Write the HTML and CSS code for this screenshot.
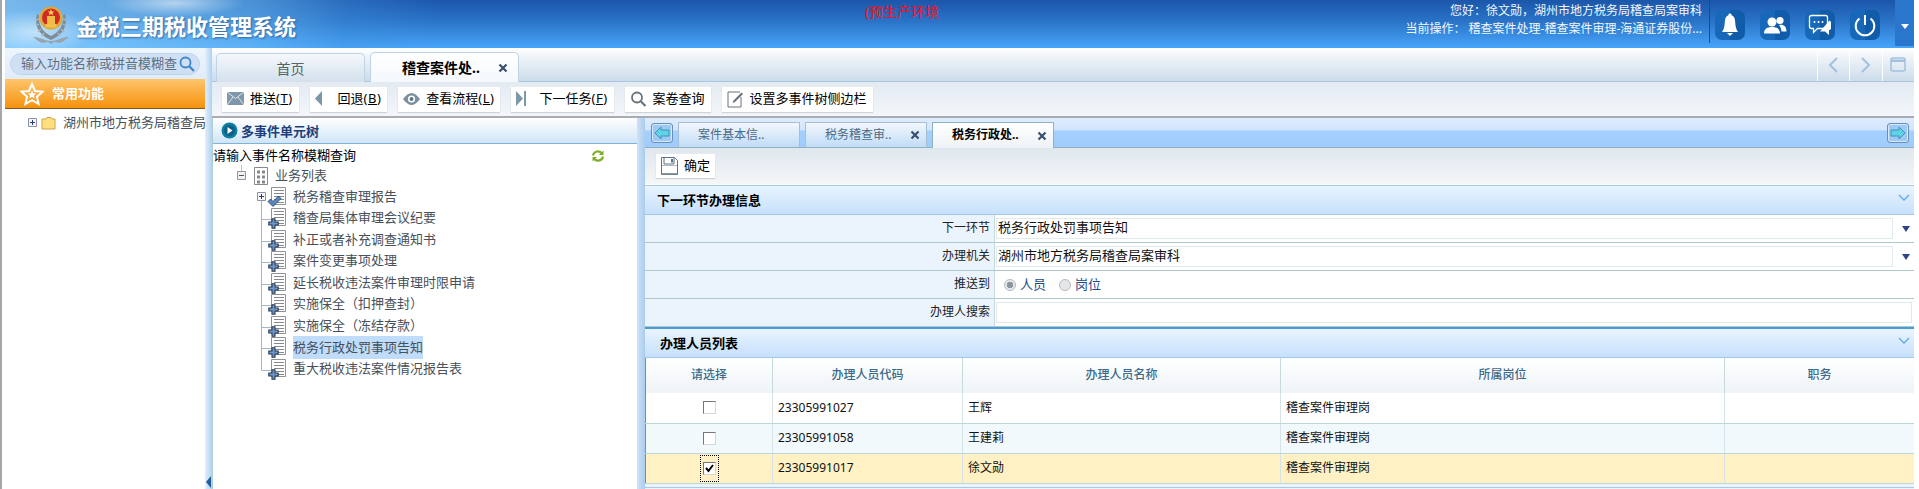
FILE: index.html
```html
<!DOCTYPE html>
<html lang="zh-CN">
<head>
<meta charset="utf-8">
<title>金税三期税收管理系统</title>
<link rel="stylesheet" href="styles.css">
</head>
<body>
<svg class="defs" width="0" height="0">
  <symbol id="doc" viewBox="0 0 15 18">
    <path d="M.5.500h14v17H.5z" fill="#fff" stroke="#8f9296"/>
    <path d="M3 3.500h10M3 6.500h10M3 9.500h10M3 12.500h10M3 15.500h10" stroke="#85888c"/>
  </symbol>
  <symbol id="plusb" viewBox="0 0 11 11">
    <path d="M4 .8h3v3.2h3.2v3H7v3.2H4V7H.8V4H4z" fill="#6d97cc" stroke="#2c3a52" stroke-width="1.1"/>
  </symbol>
  <symbol id="chev" viewBox="0 0 12 8"><path d="M1 1l5 5 5-5" fill="none" stroke="#5fa8ea" stroke-width="1.300"/></symbol>
  <symbol id="x" viewBox="0 0 10 10"><path d="M1.500 1.500l7 7M8.500 1.500l-7 7" stroke="#36506f" stroke-width="2.200"/></symbol>
</svg>
<div class="page">
  <header class="top">
    <svg class="logo" width="36" height="40" viewBox="0 0 36 40">
      <path d="M0 32c5 0 9 2 12 3 2 .7 4 1 6 1s4-.3 6-1c3-1 7-3 12-3-3 2-6 5-9 6l-6-1-3 2-3-2-6 1c-3-1-6-4-9-6z" fill="#97a4ad"/>
      <path d="M4 9C1 19 5 30 18 35 31 30 35 19 32 9l-2 1c1 9-3 17-12 21C9 27 5 19 6 10z" fill="#7f8d97"/>
      <path d="M6 14l-3 1M6 19l-3 2M8 24l-3 3M11 28l-2 3M30 14l3 1M30 19l3 2M28 24l3 3M25 28l2 3" stroke="#aab5bc" stroke-width="1.500"/>
      <circle cx="18" cy="13" r="11.500" fill="#dfa933"/>
      <circle cx="18" cy="12.500" r="9" fill="#cf2a23"/>
      <path d="M12.500 19h11v3.500h-11z" fill="#f0c04a"/>
      <path d="M14 11h8v8h-8z" fill="#eebd45"/>
      <path d="M18 4l1 2.500h2.500l-2 1.600.8 2.500-2.300-1.500-2.300 1.500.8-2.500-2-1.600H17z" fill="#f5d14e"/>
    </svg>
    <div class="sys-title">金税三期税收管理系统</div>
    <div class="env">(预生产环境</div>
    <div class="user">
      <div>您好：徐文勋，湖州市地方税务局稽查局案审科</div>
      <div>当前操作： 稽查案件处理-稽查案件审理-海通证券股份...</div>
    </div>
    <div class="vline"></div>
    <div class="hicons">
      <a class="hicon"><svg width="30" height="30" viewBox="0 0 30 30"><path d="M15 3.500c1 0 1.600.7 1.600 1.700 2.800 1 3.400 3.500 3.600 7 .2 4 .9 7 2.800 9.800H7c1.900-2.800 2.600-5.800 2.800-9.800.2-3.500.8-6 3.600-7C13.400 4.200 14 3.500 15 3.500z" fill="#fff"/><path d="M12 23h6l-3 3z" fill="#fff"/></svg></a>
      <a class="hicon"><svg width="30" height="30" viewBox="0 0 30 30"><circle cx="12" cy="12" r="4.500" fill="#fff"/><path d="M4 23.500c0-4.500 3-6.500 8-6.500s8 2 8 6.500z" fill="#fff"/><circle cx="20" cy="10.500" r="3.600" fill="#fff"/><path d="M19 15c4-1 7.500.8 7.500 6.500h-5c-.2-2.500-1-4.500-2.500-6.500z" fill="#fff"/></svg></a>
      <a class="hicon"><svg width="30" height="30" viewBox="0 0 30 30"><path d="M6.500 5.500h14a2 2 0 0 1 2 2v9a2 2 0 0 1-2 2h-8l-4 4v-4h-2a2 2 0 0 1-2-2v-9a2 2 0 0 1 2-2z" fill="none" stroke="#fff" stroke-width="1.300"/><circle cx="9.500" cy="12" r="1" fill="#fff"/><circle cx="13.500" cy="12" r="1" fill="#fff"/><circle cx="17.500" cy="12" r="1" fill="#fff"/><path d="M24.500 10.500c1 .5 1.500 1 1.500 2.500v5c0 1.500-1 2-2 2v5l-4-3.500h-5z" fill="#fff"/></svg></a>
      <a class="hicon"><svg width="30" height="30" viewBox="0 0 30 30"><path d="M9.500 8.500a9.300 9.300 0 1 0 11 0" fill="none" stroke="#fff" stroke-width="2"/><path d="M15 5v10" stroke="#fff" stroke-width="2"/></svg></a>
    </div>
    <div class="hdrop"><i class="tri-white"></i></div>
  </header>

  <div class="content">
    <aside class="side">
      <div class="search-wrap">
        <div class="search">
          <span class="search-text">输入功能名称或拼音模糊查</span>
          <svg width="16" height="16" viewBox="0 0 16 16"><circle cx="6.500" cy="6.500" r="5" fill="none" stroke="#3d86c9" stroke-width="1.800"/><path d="M10.500 10.500l4.500 4.500" stroke="#3d86c9" stroke-width="2.200"/></svg>
        </div>
      </div>
      <div class="fav">
        <svg width="24" height="24" viewBox="0 0 24 24"><path d="M12 2l3 7 7.500.7-5.600 5 1.700 7.300L12 18.200 5.400 22l1.700-7.300-5.600-5L9 9z" fill="none" stroke="#fff" stroke-width="2"/><path d="M12 8.500l1.300 2.800 3 .3-2.300 2 .7 3L12 15l-2.700 1.600.7-3-2.300-2 3-.3z" fill="#fff"/></svg>
        <span>常用功能</span>
      </div>
      <div class="side-tree">
        <svg class="pm" width="9" height="9" viewBox="0 0 9 9"><path d="M.5.500h8v8h-8z" fill="#f4f6fa" stroke="#8d93a8"/><path d="M2 4.500h5M4.500 2v5" stroke="#2b3f78"/></svg>
        <svg width="15" height="14" viewBox="0 0 15 14"><path d="M1 3h4l1-1.500h4L11 3h3v10H1z" fill="#ffdf7e" stroke="#c9a34c"/></svg>
        <span>湖州市地方税务局稽查局</span>
      </div>
    </aside>
    <div class="gutter"><i class="tri-left"></i></div>

    <main class="main">
      <div class="tabstrip">
        <div class="mtab">首页</div>
        <div class="mtab active"><span>稽查案件处..</span><svg width="10" height="10"><use href="#x"/></svg></div>
        <div class="strip-ctl">
          <a><svg width="12" height="16" viewBox="0 0 12 16"><path d="M10 1L3 8l7 7" fill="none" stroke="#a3c1de" stroke-width="2"/></svg></a>
          <a><svg width="12" height="16" viewBox="0 0 12 16"><path d="M2 1l7 7-7 7" fill="none" stroke="#a3c1de" stroke-width="2"/></svg></a>
          <a><svg width="16" height="15" viewBox="0 0 16 15"><rect x="1" y="1" width="14" height="13" rx="2" fill="none" stroke="#a3c1de" stroke-width="1.500"/><path d="M1 2.500h14v2.500H1z" fill="#a3c1de"/></svg></a>
        </div>
      </div>

      <div class="toolbar">
        <a class="btn"><svg class="ico" width="17" height="14" viewBox="0 0 17 14"><path d="M0 0h17v13H0z" fill="#7f97ab"/><path d="M0 0l8.500 6.500L17 0M0 13l6-8M17 13l-6-8" fill="none" stroke="#dfe6ec"/></svg><span>推送<span class="key">(<u>T</u>)</span></span></a>
        <a class="btn"><svg class="ico" width="17" height="16" viewBox="0 0 17 16"><path d="M7 0v15L0 7.500z" fill="#7c97a8"/></svg><span>回退<span class="key">(<u>B</u>)</span></span></a>
        <a class="btn"><svg class="ico" width="17" height="12" viewBox="0 0 17 12"><path d="M0 6c3-4 6-6 8.500-6S14 2 17 6c-3 4-6 6-8.500 6S3 10 0 6z" fill="#7c8f9c"/><circle cx="8.500" cy="6" r="3.600" fill="#fff"/><circle cx="8.500" cy="6" r="2" fill="#5e7686"/></svg><span>查看流程<span class="key">(<u>L</u>)</span></span></a>
        <a class="btn"><svg class="ico" width="17" height="16" viewBox="0 0 17 16"><path d="M0 0l7 7.500L0 15z" fill="#7c97a8"/><path d="M8 0h2v15H8z" fill="#7c97a8"/></svg><span>下一任务<span class="key">(<u>F</u>)</span></span></a>
        <a class="btn"><svg class="ico" width="17" height="16" viewBox="0 0 17 16"><circle cx="7" cy="6.500" r="5" fill="none" stroke="#66727c" stroke-width="1.800"/><path d="M11 10.500l4.500 4.500" stroke="#66727c" stroke-width="2.200"/></svg><span>案卷查询</span></a>
        <a class="btn"><svg class="ico" width="17" height="17" viewBox="0 0 17 17"><path d="M13 1H1v15h13V6" fill="none" stroke="#66727c"/><path d="M14.500 1.500l1.500 1.500-8 8-2.500 1 1-2.500z" fill="#66727c"/></svg><span>设置多事件树侧边栏</span></a>
      </div>

      <div class="panels">
        <section class="tree-panel">
          <div class="tree-head">
            <svg width="17" height="17" viewBox="0 0 17 17"><circle cx="8.500" cy="8.500" r="8" fill="#0f7f9f"/><circle cx="8.500" cy="8.500" r="5.500" fill="#0b5f88"/><path d="M6.500 5l5 3.500-5 3.500z" fill="#fff"/></svg>
            <span>多事件单元树</span>
          </div>
          <div class="tree-search">
            <span>请输入事件名称模糊查询</span>
            <svg width="14" height="14" viewBox="0 0 14 14"><path d="M2 6.500A5 5 0 0 1 11 4.500" fill="none" stroke="#7eb026" stroke-width="2.200"/><path d="M12.500 1.500v4.500H8z" fill="#7eb026"/><path d="M12 7.500A5 5 0 0 1 3 9.500" fill="none" stroke="#7eb026" stroke-width="2.200"/><path d="M1.500 12.500V8H6z" fill="#7eb026"/></svg>
          </div>
          <div class="tree-root">
            <svg width="9" height="21" viewBox="0 0 9 21"><path d="M4.500 0v6" stroke="#b4c0cc"/><path d="M.5 6.500h8v8h-8z" fill="#f0f2f5" stroke="#8f96a0"/><path d="M2 10.500h5" stroke="#555"/></svg>
            <svg class="bld" width="14" height="18" viewBox="0 0 14 18"><path d="M.5.500h13v17H.5z" fill="#fff" stroke="#85888c"/><path d="M3 3.500h3v3H3zM8 3.500h3v3H8zM3 8.500h3v3H3zM8 8.500h3v3H8zM3 13.500h3v3H3zM8 13.500h3v3H8z" fill="#85888c"/></svg>
            <span>业务列表</span>
          </div>
          <ul class="tree-list">
            <li class="node first"><svg class="conn" width="34" height="22" viewBox="0 0 34 22"><path d="M4.500 12v11" stroke="#a7b6c4"/><path d="M.5 6.500h8v8h-8z" fill="#f4f6fa" stroke="#8d93a8"/><path d="M2 10.500h5M4.500 8v5" stroke="#2b3f78"/><use href="#doc" x="14" y="1" width="15" height="18"/><path d="M11 15.500l2.500-2.500 2.500 2.500 5.500-5.500 2.500 2.500-8 8z" fill="#5a88bd" stroke="#243a5c" stroke-width=".8"/></svg><span>税务稽查审理报告</span></li>
            <li class="node"><svg class="conn" width="34" height="22" viewBox="0 0 34 22"><path d="M4.500-1v24M4.500 12.500H14" stroke="#a7b6c4"/><use href="#doc" x="14" y="1" width="15" height="18"/><use href="#plusb" x="11" y="11" width="11" height="11"/></svg><span>稽查局集体审理会议纪要</span></li>
            <li class="node"><svg class="conn" width="34" height="22" viewBox="0 0 34 22"><path d="M4.500-1v24M4.500 12.500H14" stroke="#a7b6c4"/><use href="#doc" x="14" y="1" width="15" height="18"/><use href="#plusb" x="11" y="11" width="11" height="11"/></svg><span>补正或者补充调查通知书</span></li>
            <li class="node"><svg class="conn" width="34" height="22" viewBox="0 0 34 22"><path d="M4.500-1v24M4.500 12.500H14" stroke="#a7b6c4"/><use href="#doc" x="14" y="1" width="15" height="18"/><use href="#plusb" x="11" y="11" width="11" height="11"/></svg><span>案件变更事项处理</span></li>
            <li class="node"><svg class="conn" width="34" height="22" viewBox="0 0 34 22"><path d="M4.500-1v24M4.500 12.500H14" stroke="#a7b6c4"/><use href="#doc" x="14" y="1" width="15" height="18"/><use href="#plusb" x="11" y="11" width="11" height="11"/></svg><span>延长税收违法案件审理时限申请</span></li>
            <li class="node"><svg class="conn" width="34" height="22" viewBox="0 0 34 22"><path d="M4.500-1v24M4.500 12.500H14" stroke="#a7b6c4"/><use href="#doc" x="14" y="1" width="15" height="18"/><use href="#plusb" x="11" y="11" width="11" height="11"/></svg><span>实施保全（扣押查封）</span></li>
            <li class="node"><svg class="conn" width="34" height="22" viewBox="0 0 34 22"><path d="M4.500-1v24M4.500 12.500H14" stroke="#a7b6c4"/><use href="#doc" x="14" y="1" width="15" height="18"/><use href="#plusb" x="11" y="11" width="11" height="11"/></svg><span>实施保全（冻结存款）</span></li>
            <li class="node"><svg class="conn" width="34" height="22" viewBox="0 0 34 22"><path d="M4.500-1v24M4.500 12.500H14" stroke="#a7b6c4"/><use href="#doc" x="14" y="1" width="15" height="18"/><use href="#plusb" x="11" y="11" width="11" height="11"/></svg><span class="sel">税务行政处罚事项告知</span></li>
            <li class="node"><svg class="conn" width="34" height="22" viewBox="0 0 34 22"><path d="M4.500-1v13.500H14" fill="none" stroke="#a7b6c4"/><use href="#doc" x="14" y="1" width="15" height="18"/><use href="#plusb" x="11" y="11" width="11" height="11"/></svg><span>重大税收违法案件情况报告表</span></li>
          </ul>
        </section>

        <div class="split"></div>

        <section class="detail">
          <div class="dtabs">
            <a class="arrow-btn"><svg width="16" height="14" viewBox="0 0 16 14"><path d="M7 1v3h8v6H7v3L1 7z" fill="#5fd3e6" stroke="#3f8fb8"/></svg></a>
            <div class="dtab"><span>案件基本信..</span></div>
            <div class="dtab"><span>税务稽查审..</span><svg width="10" height="10"><use href="#x"/></svg></div>
            <div class="dtab active"><span>税务行政处..</span><svg width="10" height="10"><use href="#x"/></svg></div>
            <a class="arrow-btn right"><svg width="16" height="14" viewBox="0 0 16 14"><path d="M9 1v3H1v6h8v3l6-6z" fill="#5fd3e6" stroke="#3f8fb8"/></svg></a>
          </div>
          <div class="dtools">
            <a class="btn save"><svg width="17" height="18" viewBox="0 0 17 18"><path d="M.5.500h13l3 3v14H.5z" fill="#fff" stroke="#5f7282"/><path d="M3 .500h10v6.500H3z" fill="#fff" stroke="#5f7282"/><path d="M10 2h2v3.500h-2z" fill="#5f7282"/><path d="M1 8.500h15V9H1z" fill="#5f7282"/><path d="M1 16h15v1.500H1z" fill="#8598a6"/></svg><span>确定</span></a>
          </div>
          <div class="sec-head"><span>下一环节办理信息</span><svg width="12" height="8"><use href="#chev"/></svg></div>
          <div class="form">
            <div class="frow">
              <label>下一环节</label>
              <div class="fval"><div class="inp">税务行政处罚事项告知</div><i class="tri-dark"></i></div>
            </div>
            <div class="frow">
              <label>办理机关</label>
              <div class="fval"><div class="inp">湖州市地方税务局稽查局案审科</div><i class="tri-dark"></i></div>
            </div>
            <div class="frow">
              <label>推送到</label>
              <div class="fval radios">
                <i class="radio on"></i><span>人员</span>
                <i class="radio"></i><span>岗位</span>
              </div>
            </div>
            <div class="frow">
              <label>办理人搜索</label>
              <div class="fval"><div class="inp full"></div></div>
            </div>
          </div>
          <div class="sec-head second"><span>办理人员列表</span><svg width="12" height="8"><use href="#chev"/></svg></div>
          <table class="grid">
            <colgroup><col class="c1"><col class="c2"><col class="c3"><col class="c4"><col></colgroup>
            <thead><tr><th>请选择</th><th>办理人员代码</th><th>办理人员名称</th><th>所属岗位</th><th>职务</th></tr></thead>
            <tbody>
              <tr><td class="ck"><i class="box"></i></td><td>23305991027</td><td>王辉</td><td>稽查案件审理岗</td><td></td></tr>
              <tr class="alt"><td class="ck"><i class="box"></i></td><td>23305991058</td><td>王建莉</td><td>稽查案件审理岗</td><td></td></tr>
              <tr class="hit"><td class="ck"><span class="focus"><i class="box"><svg width="11" height="11" viewBox="0 0 11 11"><path d="M2 5l2.500 3L9 2" fill="none" stroke="#000" stroke-width="2"/></svg></i></span></td><td>23305991017</td><td>徐文勋</td><td>稽查案件审理岗</td><td></td></tr>
            </tbody>
          </table>
          <div class="foot"></div>
        </section>
      </div>
    </main>
  </div>
</div>
</body>
</html>
```
FILE: styles.css
```css
* { box-sizing: border-box; }
html, body { margin: 0; padding: 0; height: 100%; background: #fff; overflow: hidden; }
body { font: 13px/1.2 "Noto Sans", "Noto Sans CJK SC", sans-serif; color: #000; }
.defs { display: block; height: 0; }
a { color: inherit; text-decoration: none; }
i { display: block; }
svg { display: block; flex: none; }

.page {
  width: 1914px; height: 489px; border-left: 2px solid #a4a8ab; padding-left: 3px;
  display: flex; flex-direction: column; overflow: hidden;
}

/* header */
.top {
  height: 48px; flex: none; display: flex; align-items: flex-start; color: #fff;
  background:
    radial-gradient(ellipse 60px 22px at 30px 32px, rgba(255,255,255,.55), transparent),
    radial-gradient(ellipse 70px 14px at 170px 3px, rgba(255,255,255,.55), transparent),
    linear-gradient(100deg, rgba(150,215,255,.75) 0, rgba(110,190,245,.55) 13%, rgba(70,150,225,.3) 18%, transparent 23%),
    linear-gradient(#1b56aa, #2a74c8 45%, #48a5fa);
}
.logo { margin: 5px 0 0 28px; }
.sys-title {
  margin: 11px 0 0 7px; font-size: 22px; line-height: 30px; font-weight: 700; white-space: nowrap;
  text-shadow: 1px 1px 2px rgba(20,60,110,.6);
}
.env { margin: 3px 0 0 569px; font-size: 14px; line-height: 18px; color: #f0141e; white-space: nowrap; }
.user { margin-left: auto; padding: 2px 7px 0 0; text-align: right; font-size: 12px; line-height: 18px; color: #f2f7fd; white-space: nowrap; }
.vline { width: 1px; height: 43px; background: #164b8e; }
.hicons { display: flex; gap: 15px; margin: 10px 15px 0 5px; }
.hicon { width: 30px; height: 30px; border-radius: 7px; background: linear-gradient(90deg, #1768b8 50%, #105ca9 50%); }
.hdrop { width: 19px; height: 46px; background: #2a76cc; display: flex; justify-content: center; padding-top: 24px; }
.tri-white { width: 0; height: 0; border: 4.500px solid transparent; border-top: 5px solid #fff; border-bottom: 0; }

/* layout */
.content { flex: 1; display: flex; min-height: 0; }
.side { width: 200px; flex: none; display: flex; flex-direction: column; overflow: hidden; }
.search-wrap { height: 31px; padding: 5px 5px 0 5px; background: linear-gradient(#eef5fd, #dfecfa); }
.search {
  height: 22px; border-radius: 11px; background: #cfe0f5; border: 1px solid #bed4ee;
  display: flex; align-items: center; padding: 0 6px 0 10px; gap: 2px; color: #5e7083;
}
.search-text { flex: 1; white-space: nowrap; }
.fav {
  height: 30px; flex: none; display: flex; align-items: center; padding-left: 15px; gap: 8px;
  background: linear-gradient(#ffc56c, #f6920e); border-bottom: 1px solid #7d5a24;
  color: #fff; font-weight: 700;
}
.fav span { padding-top: 1px; }
.side-tree { display: flex; align-items: center; padding: 1px 0 0 23px; height: 26px; white-space: nowrap; color: #48505a; }
.side-tree .pm { margin-right: 4px; }
.side-tree span { margin-left: 7px; }

.gutter {
  width: 7px; flex: none; background: linear-gradient(90deg, #e4effb, #aed2f3);
  display: flex; align-items: flex-end; justify-content: center; padding-bottom: 1px;
}
.tri-left { width: 0; height: 0; border: 6px solid transparent; border-right: 5px solid #1f5d9c; border-left: 0; }

.main { flex: 1; min-width: 0; display: flex; flex-direction: column; }
.tabstrip {
  height: 34px; flex: none; display: flex; align-items: flex-end; gap: 5px; padding-left: 4px;
  background: linear-gradient(#fff, #eef3f8 30%, #ccdcea); border-bottom: 1px solid #a9c6e0;
}
.mtab {
  width: 149px; height: 29px; border: 1px solid #bed3e8; border-bottom: 0; border-radius: 5px 5px 0 0;
  background: linear-gradient(#f5f8fb, #d3e0ec); text-align: center; font-size: 14px; line-height: 29px; color: #566;
  margin-bottom: -1px;
}
.mtab.active {
  background: linear-gradient(#fff, #f4f8fc); color: #000; font-weight: 700;
  display: flex; align-items: center; padding-left: 31px; gap: 18px; height: 30px;
}
.mtab.active span { line-height: 1; }
.strip-ctl { margin-left: auto; display: flex; height: 33px; }
.strip-ctl a { width: 32.500px; border-left: 1px solid #fff; display: flex; align-items: center; justify-content: center; }

.toolbar {
  height: 36px; flex: none; display: flex; gap: 11px; padding: 5px 0 0 10px;
  background: linear-gradient(#e3eaf2, #f3f7fb); border-bottom: 2px solid #a9adb1;
}
.btn {
  height: 25px; display: flex; align-items: center; padding: 0 6px 1px 5px;
  background: #fff; box-shadow: 0 1px 1px #cfd4d8, 0 0 2px #e6eaee; white-space: nowrap;
}
.key { letter-spacing: .5px; }
.ico { margin-right: 6px; }

.panels { flex: 1; min-height: 0; display: flex; }
.tree-panel { width: 425px; flex: none; border-left: 1px solid #b0d0d0; display: flex; flex-direction: column; }
.tree-head {
  height: 26px; flex: none; display: flex; align-items: center; gap: 3px; padding-left: 8px;
  background: linear-gradient(#fff, #cfe5f7); border-bottom: 1px solid #7fb2d4;
  color: #1d3f7c; font-weight: 700;
}
.tree-head span { padding-top: 2px; }
.tree-search { height: 21px; flex: none; display: flex; align-items: center; justify-content: space-between; padding-right: 32px; padding-top: 2px; }
.tree-root { height: 21px; flex: none; display: flex; align-items: center; padding-left: 24px; color: #48505a; }
.tree-root .bld { margin: 0 7px 0 8px; }
.tree-list { list-style: none; margin: 0; padding: 0 0 0 44px; }
.node { height: 21.500px; display: flex; align-items: center; gap: 2px; color: #48505a; white-space: nowrap; }
.conn { overflow: visible; }
.sel { background: #bfdcfb; line-height: 23px; }

.split { width: 8px; flex: none; background: linear-gradient(90deg, #cfe2f6, #a9cdef); }
.detail { flex: 1; min-width: 0; display: flex; flex-direction: column; background: #ebf4fd; }
.dtabs {
  height: 30px; flex: none; display: flex; align-items: flex-end; gap: 5px; padding-left: 6px;
  background: linear-gradient(#deecfe 0, #d3e6fd 40%, #a5d0fe 45%, #9fccfd);
  border-bottom: 1px solid #8fb3bd;
}
.arrow-btn {
  width: 22px; height: 20px; margin: 0 0 4px 0; border: 1px solid #6a8fb2; border-radius: 3px;
  background: #9fc9f5; display: flex; align-items: center; justify-content: center; box-shadow: inset 0 0 0 1px #d7e8fb;
}
.arrow-btn.right { margin-left: auto; margin-right: 5px; }
.dtab {
  width: 122px; height: 25px; border: 1px solid #a5c0d3; border-bottom: 0; padding-left: 19px;
  display: flex; align-items: center; justify-content: space-between; padding-right: 6px;
  background: linear-gradient(#f2f7fd, #c2dcf8); font-size: 12px; color: #4a6a85;
}
.dtab.active {
  height: 26px; margin-bottom: -1px; background: linear-gradient(#fff, #eef3f7); color: #000; font-weight: 700; border-color: #8fb3bd;
}
.dtools { height: 37px; flex: none; padding: 6px 0 0 11px; background: linear-gradient(#dfe7ee, #f4f6f8); border-bottom: 1px solid #fff; }
.btn.save { width: 59px; height: 24px; gap: 6px; }
.sec-head {
  height: 30px; flex: none; display: flex; align-items: center; justify-content: space-between;
  padding: 0 4px 4px 12px; font-weight: 700;
  background: linear-gradient(#e9f4ff, #c6e0fb); border-top: 1px solid #a6cbe4; border-bottom: 1px solid #a3c8e6;
}
.sec-head span { padding-top: 6px; }
.sec-head.second { border-top: 2px solid #4a9ad9; height: 31px; padding-left: 15px; }
.form { flex: none; }
.frow { height: 28px; display: flex; border-bottom: 1px solid #afc9c9; }
.frow label { width: 350px; flex: none; text-align: right; padding: 6px 4px 0 0; font-size: 12px; color: #222; border-right: 1px solid #c5d8dc; }
.fval { flex: 1; min-width: 0; background: #fff; display: flex; align-items: center; padding-left: 1px; }
.inp { width: 897px; height: 21px; border: 1px solid #e0e9ec; padding-left: 1px; line-height: 16px; white-space: nowrap; color: #111; }
.inp.full { width: 916px; }
.tri-dark { margin-left: 9px; width: 0; height: 0; border: 4.500px solid transparent; border-top: 6px solid #2e4684; border-bottom: 0; }
.radios { padding-left: 9px; font-size: 13px; color: #1d4a8a; }
.radio { width: 12px; height: 12px; border-radius: 50%; border: 1px solid #b4babf; background: #e4e7ea; margin-right: 4px; }
.radio.on { background: radial-gradient(circle, #8d959c 3px, #e6e9ec 3.500px); }
.radios span { margin-right: 13px; }

.grid { width: 100%; table-layout: fixed; border-collapse: collapse; background: #fff; font-size: 12px; flex: none; border-left: 1px solid #4a9ad9; }
.c1 { width: 127px; } .c2 { width: 190px; } .c3 { width: 318px; } .c4 { width: 444px; }
.grid th {
  height: 35px; padding: 0; font-weight: 500; color: #3b6a8a; text-align: center;
  background: linear-gradient(#fff, #eef3f7); border-left: 1px solid #c6dadb;
}
.grid td { height: 30px; padding: 0 0 0 5px; border-left: 1px solid #d5e3e6; border-bottom: 1px solid #bdd6d6; color: #111; }
.grid th:first-child, .grid td:first-child { border-left: 0; }
.alt td { background: #f1f9fd; }
.hit td { background: #fff1c4; }
.grid .ck { padding: 0; }
.box { width: 13px; height: 13px; margin: 0 auto; background: #fff; border: 1px solid #d6d6d6; border-top-color: #777; border-left-color: #777; display: flex; align-items: center; justify-content: center; }
.focus { display: flex; width: 19px; height: 27px; margin: 0 auto; align-items: center; outline: 1px dotted #000; outline-offset: -1px; }
.foot { flex: 1; margin-top: 3px; border-top: 1px solid #a9c9e6; }
```
